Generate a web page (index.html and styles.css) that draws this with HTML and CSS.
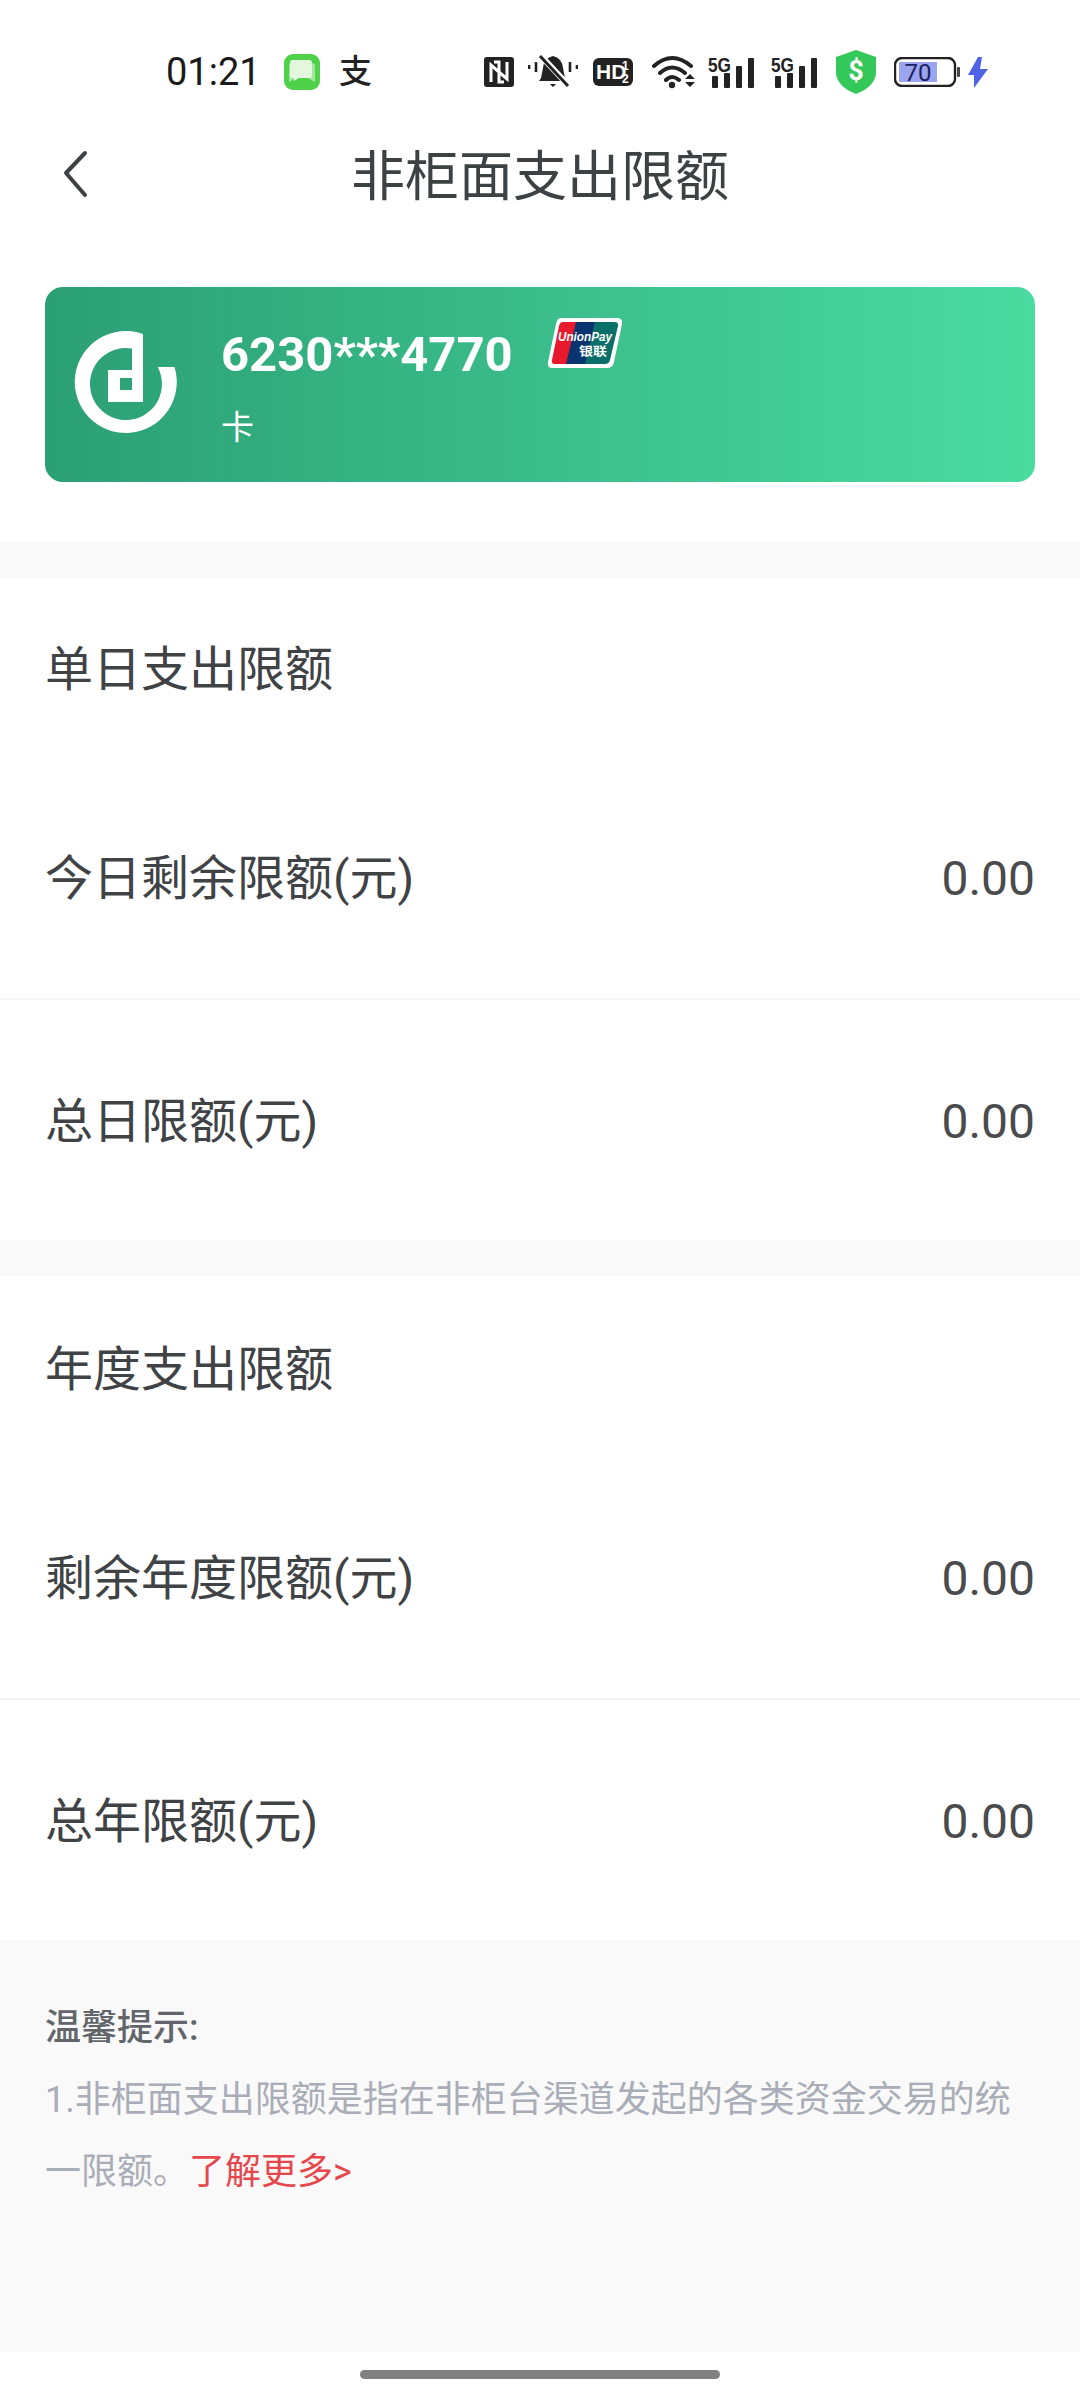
FILE: index.html
```html
<!DOCTYPE html>
<html lang="zh">
<head>
<meta charset="utf-8">
<title>非柜面支出限额</title>
<link rel="stylesheet" href="styles.css">
</head>
<body>
<div class="page">
  <div class="status">
    <span class="time">01:21</span>
    <svg class="s-msg" width="36" height="36" viewBox="0 0 36 36"><rect width="36" height="36" rx="9" fill="#4fd14a"/><path d="M5 28 V12 Q5 9 8 9 H28 Q31 9 31 12 V28 L24 24 H12 Z" fill="#a5e69e"/><path d="M8 6 H25 Q28 6 28 9 V21 Q28 24 25 24 H15 L10 27 V24 H8 Q6 24 6 21 V9 Q6 6 8 6 Z" fill="#e3f7df"/></svg>
    <span class="s-ali">支</span>
    <svg class="s-nfc" width="30" height="30" viewBox="0 0 30 30"><rect width="30" height="30" rx="3" fill="#222"/><path d="M7 25 V8 L15 15 M23 5 V22 L15 15 M15 15 V5 H10 M15 15 V25 H20" fill="none" stroke="#fff" stroke-width="3"/></svg>
    <svg class="s-bell" width="50" height="34" viewBox="0 0 50 34"><path d="M25 1 Q34 3 35 13 L37 23 L39 26 H11 L13 23 L15 13 Q16 3 25 1 Z M22 29 H28 L25 32 Z" fill="#222"/><path d="M13 1 L41 31" stroke="#fff" stroke-width="6"/><path d="M12 1 L40 31" stroke="#222" stroke-width="3"/><path d="M1 10 V14 M8 7 V17 M42 7 V17 M49 10 V14" stroke="#222" stroke-width="2.6"/></svg>
    <svg class="s-hd" width="40" height="28" viewBox="0 0 40 28"><rect width="40" height="28" rx="6" fill="#222"/><text x="3" y="21" class="hd-t">HD</text><text x="29" y="12" class="hd-s">1</text><text x="29" y="25" class="hd-s">2</text></svg>
    <svg class="s-wifi" width="44" height="34" viewBox="0 0 44 34"><path d="M2 11 Q20 -5 39 11 M8 18 Q20 7 33 18 M14 25 Q20 19 27 25" fill="none" stroke="#222" stroke-width="4" stroke-linecap="round"/><circle cx="20" cy="30" r="3.200" fill="#222"/><path d="M33 24 L38 19 L43 24 Z M33 27 H43 L38 32 Z" fill="#222"/></svg>
    <svg class="s-sig" width="47" height="38" viewBox="0 -3 47 38"><text x="0" y="16" class="sig-t" textLength="23" lengthAdjust="spacingAndGlyphs">5G</text><rect x="4" y="20" width="6" height="12" rx="1" fill="#222"/><rect x="16" y="17" width="6" height="15" rx="1" fill="#222"/><rect x="28" y="10" width="6" height="22" rx="1" fill="#222"/><rect x="40" y="2" width="6" height="30" rx="1" fill="#222"/></svg>
    <svg class="s-sig s-sig2" width="47" height="38" viewBox="0 -3 47 38"><text x="0" y="16" class="sig-t" textLength="23" lengthAdjust="spacingAndGlyphs">5G</text><rect x="4" y="20" width="6" height="12" rx="1" fill="#222"/><rect x="16" y="17" width="6" height="15" rx="1" fill="#222"/><rect x="28" y="10" width="6" height="22" rx="1" fill="#222"/><rect x="40" y="2" width="6" height="30" rx="1" fill="#222"/></svg>
    <svg class="s-shield" width="40" height="44" viewBox="0 0 40 44"><path d="M20 0 L40 7 V24 Q38 37 20 44 Q2 37 0 24 V7 Z" fill="#34c759"/><text x="20" y="30" class="shield-t">$</text></svg>
    <svg class="s-bat" width="66" height="30" viewBox="0 0 66 30"><rect x="1" y="1" width="60" height="28" rx="7" fill="#fff" stroke="#222" stroke-width="2.400"/><rect x="5" y="5" width="38" height="20" fill="#9aa4ef"/><text x="24" y="24" class="bat-t">70</text><rect x="63" y="10" width="3" height="10" rx="1" fill="#444"/></svg>
    <svg class="s-bolt" width="20" height="31" viewBox="0 0 20 31"><path d="M10 0 L0 18 H6 L6 31 L20 12 H12 L14 0 Z" fill="#4f62e6"/></svg>
  </div>

  <header class="nav">
    <svg class="back" width="30" height="48" viewBox="0 0 30 48"><path d="M25 3 L6 23 L25 45" fill="none" stroke="#3c4144" stroke-width="4" stroke-linecap="round" stroke-linejoin="round" /></svg>
    <h1 class="title">非柜面支出限额</h1>
  </header>

  <div class="card-wrap">
    <div class="card">
      <svg class="bank" width="130" height="130" viewBox="0 0 130 130"><path fill="#fff" fill-rule="evenodd" d="M83 14 A51 51 0 1 0 114.500 47 L97.700 47 A36 36 0 1 1 72 28.500 V50 H48 V82 H83 Z M60 58 H72 V70 H60 Z"/></svg>
      <div class="card-text">
        <div class="card-top">
          <span class="card-no">6230***4770</span>
          <svg class="up" width="74" height="50" viewBox="0 0 74 50"><path d="M13 0 H69 Q75 0 74 6 L66 44 Q65 50 59 50 H4 Q-1 50 0 44 L8 6 Q9 0 13 0 Z" fill="#fff"/><path d="M15 4 H31 L21 46 H7 Q3 46 4 42 L11 8 Q12 4 15 4 Z" fill="#e8192c"/><path d="M28 4 H50 L40 46 H18 Z" fill="#0a3470"/><path d="M47 4 H66 Q71 4 70 8 L62 42 Q61 46 57 46 H37 Z" fill="#0a6f68"/><text x="10" y="23" class="up-en" textLength="54" lengthAdjust="spacingAndGlyphs">UnionPay</text><text x="31" y="38" class="up-cn" textLength="28" lengthAdjust="spacingAndGlyphs">银联</text></svg>
        </div>
        <div class="card-type">卡</div>
      </div>
    </div>
  </div>

  <div class="band"></div>
  <section class="group">
    <div class="group-title">单日支出限额</div>
    <div class="row"><span>今日剩余限额(元)</span><span class="val">0.00</span></div>
    <div class="row last"><span>总日限额(元)</span><span class="val">0.00</span></div>
  </section>
  <div class="band"></div>
  <section class="group">
    <div class="group-title title-b">年度支出限额</div>
    <div class="row"><span>剩余年度限额(元)</span><span class="val">0.00</span></div>
    <div class="row last"><span>总年限额(元)</span><span class="val">0.00</span></div>
  </section>

  <section class="tips">
    <div class="tips-head">温馨提示:</div>
    <p class="tips-body">1.非柜面支出限额是指在非柜台渠道发起的各类资金交易的统一限额。<a class="more">了解更多&gt;</a></p>
  </section>

  <div class="home"><span class="handle"></span></div>
</div>
</body>
</html>
```

FILE: styles.css
```css
* { box-sizing: border-box; }
html, body { margin: 0; padding: 0; background: #fff; }
body { font-family: Roboto, "Noto Sans CJK SC", sans-serif; color: #3f4346; }
.page { width: 1080px; height: 2400px; display: flex; flex-direction: column; overflow: hidden; }

.status { height: 132px; padding: 12px 0 0 166px; display: flex; align-items: center; color: #222; flex: none; }
.time { font-size: 38px; line-height: 40px; width: 91px; color: #1a1a1a; }
.s-msg { margin-left: 27px; }
.s-ali { margin-left: 19px; width: 33px; font-size: 33px; line-height: 36px; font-weight: 500; color: #222; }
.s-nfc { margin-left: 112px; }
.s-bell { margin-left: 14px; }
.s-hd { margin-left: 15px; }
.s-wifi { margin-left: 19px; }
.s-sig { margin-left: 12px; }
.s-sig2 { margin-left: 16px; }
.s-shield { margin-left: 18px; }
.s-bat { margin-left: 18px; }
.s-bolt { margin-left: 8px; }
.hd-t { font: 700 21px "Liberation Sans", sans-serif; fill: #fff; }
.hd-s { font: 700 12px "Liberation Sans", sans-serif; fill: #fff; }
.sig-t { font: 700 21px "Liberation Sans", sans-serif; fill: #222; }
.shield-t { font: 700 27px Roboto, sans-serif; fill: #fff; text-anchor: middle; }
.bat-t { font: 400 24px Roboto, sans-serif; fill: #1b2060; text-anchor: middle; }

.nav { height: 90px; flex: none; display: flex; align-items: center; justify-content: center; position: relative; padding-top: 2px; }
.back { position: absolute; left: 60px; top: 18px; }
.title { margin: 0; font-size: 54px; line-height: 64px; font-weight: 400; color: #3c4144; }

.card-wrap { height: 320px; padding-top: 65px; flex: none; }
.card { width: 990px; height: 195px; margin-left: 45px; border-radius: 18px; background: linear-gradient(90deg, #2b9f74 0%, #4adba1 100%); display: flex; color: #fff; padding-left: 15px; }
.bank { margin-top: 33px; flex: none; }
.card-text { margin-left: 31px; padding-top: 31px; }
.card-top { display: flex; align-items: flex-start; }
.card-no { font-size: 49px; line-height: 60px; font-weight: 700; margin-top: 7px; }
.up { margin: 0 0 0 35px; flex: none; }
.up-en { font: italic 700 12px "Liberation Sans", sans-serif; fill: #fff; }
.up-cn { font: 700 12px "Noto Sans CJK SC", sans-serif; fill: #fff; }
.card-type { font-size: 33px; line-height: 44px; margin-top: 21px; }

.band { height: 36px; background: #f9f9f9; flex: none; }
.group { flex: none; }
.group-title { height: 182px; padding: 68px 45px 0; font-size: 48px; line-height: 48px; }
.title-b { height: 184px; padding-top: 70px; }
.row { height: 240px; display: flex; justify-content: space-between; align-items: center; padding: 0 45px; font-size: 48px; line-height: 60px; border-bottom: 2px solid #f4f4f4; }
.row.last { border-bottom: 0; padding-top: 3px; }
.val { color: #4a4b4d; }

.tips { flex: 1; background: #f9f9f9; padding: 52px 45px 0; font-size: 36px; line-height: 72px; }
.tips-head { color: #62666b; font-weight: 500; }
.tips-body { margin: 0; color: #a9adb8; }
.more { color: #e5474c; }

.home { height: 48px; flex: none; display: flex; justify-content: center; padding-top: 18px; }
.handle { width: 360px; height: 9px; border-radius: 5px; background: #808080; }
```
